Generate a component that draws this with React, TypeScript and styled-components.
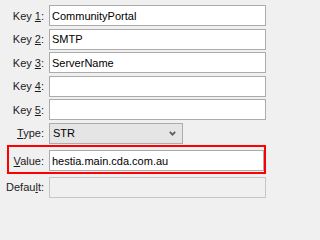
import React from "react";
import styled, { createGlobalStyle } from "styled-components";

const GlobalStyle = createGlobalStyle`
	html, body {
		margin: 0;
		padding: 0;
		background: #f0f0f0;
	}
	body {
		font-family: "Liberation Sans", Arial, sans-serif;
		font-size: 11px;
		color: #000;
	}
`;

const Form = styled.div`
	width: 266px;
	height: 202px;
	padding-top: 5px;
	box-sizing: border-box;
	display: flex;
	flex-direction: column;
	gap: 2.5px;
	overflow: hidden;
`;

const Row = styled.div`
	display: flex;
	align-items: center;
	height: 21px;
	gap: 5px;
`;

const Label = styled.label<{ $width?: number }>`
	width: ${(p) => p.$width ?? 44}px;
	flex: none;
	text-align: right;
	color: #1b1b1b;
	white-space: nowrap;
`;

const Field = styled.div<{ $disabled?: boolean }>`
	flex: 1;
	height: 21px;
	box-sizing: border-box;
	border: 1px solid ${(p) => (p.$disabled ? "#c6c6c6" : "#ababab")};
	background: ${(p) => (p.$disabled ? "#f0f0f0" : "#ffffff")};
	padding-left: 2px;
	display: flex;
	align-items: center;
	color: #000;
`;

const Select = styled.div`
	width: 134px;
	height: 21px;
	box-sizing: border-box;
	border: 1px solid #acacac;
	background: #e5e5e5;
	padding: 0 6px 0 3px;
	display: flex;
	align-items: center;
	justify-content: space-between;
`;

const Highlight = styled.div`
	margin: -1px 0 0 7px;
	border: 2px solid #ff0000;
	padding: 3px 0 1px 0;
	display: flex;
	align-items: center;
	gap: 5px;
	height: 21px;
	flex: none;
	box-sizing: content-box;
`;

const Chevron = () => (
	<svg width="7" height="5" viewBox="0 0 7 5">
		<polyline points="0.8,0.8 3.5,3.6 6.2,0.8" fill="none" stroke="#5f5f5f" strokeWidth="1.8" />
	</svg>
);

const keys = ["CommunityPortal", "SMTP", "ServerName", "", ""];

export default function App() {
	return (
		<>
			<GlobalStyle />
			<Form>
				{keys.map((value, index) => (
					<Row key={`KEY_${index}`}>
						<Label>
							Key <u>{index + 1}</u>:
						</Label>
						<Field>{value}</Field>
					</Row>
				))}
				<Row>
					<Label>
						<u>T</u>ype:
					</Label>
					<Select>
						<span>STR</span>
						<Chevron />
					</Select>
				</Row>
				<Highlight>
					<Label $width={35}>
						<u>V</u>alue:
					</Label>
					<Field>hestia.main.cda.com.au</Field>
				</Highlight>
				<Row>
					<Label>
						Defau<u>l</u>t:
					</Label>
					<Field $disabled />
				</Row>
			</Form>
		</>
	);
}
